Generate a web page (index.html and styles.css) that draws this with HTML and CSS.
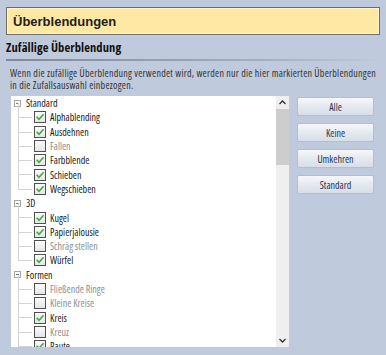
FILE: index.html
```html
<!DOCTYPE html>
<html lang="de">
<head>
<meta charset="utf-8">
<link rel="stylesheet" href="styles.css">
</head>
<body>
<div class="page">
  <div class="banner"><span>Überblendungen</span></div>
  <h2 class="section-title">Zufällige Überblendung</h2>
  <p class="desc">Wenn die zufällige Überblendung verwendet wird, werden nur die hier markierten Überblendungen in die Zufallsauswahl einbezogen.</p>
  <div class="main">
    <div class="treebox">
      <div class="tree">
        <div class="group">
          <div class="group-head"><span class="expander"></span>Standard</div>
          <ul class="items">
            <li class="item on"><span class="cb"></span>Alphablending</li>
            <li class="item on"><span class="cb"></span>Ausdehnen</li>
            <li class="item"><span class="cb"></span>Fallen</li>
            <li class="item on"><span class="cb"></span>Farbblende</li>
            <li class="item on"><span class="cb"></span>Schieben</li>
            <li class="item on"><span class="cb"></span>Wegschieben</li>
          </ul>
        </div>
        <div class="group">
          <div class="group-head"><span class="expander"></span>3D</div>
          <ul class="items">
            <li class="item on"><span class="cb"></span>Kugel</li>
            <li class="item on"><span class="cb"></span>Papierjalousie</li>
            <li class="item"><span class="cb"></span>Schräg stellen</li>
            <li class="item on"><span class="cb"></span>Würfel</li>
          </ul>
        </div>
        <div class="group">
          <div class="group-head"><span class="expander"></span>Formen</div>
          <ul class="items">
            <li class="item"><span class="cb"></span>Fließende Ringe</li>
            <li class="item"><span class="cb"></span>Kleine Kreise</li>
            <li class="item on"><span class="cb"></span>Kreis</li>
            <li class="item"><span class="cb"></span>Kreuz</li>
            <li class="item on"><span class="cb"></span>Raute</li>
            <li class="item"><span class="cb"></span>Stern</li>
          </ul>
        </div>
      </div>
      <div class="scrollbar">
        <div class="arrow up"><svg width="7" height="5" viewBox="0 0 7 5"><path d="M0.5 4 L3.5 1 L6.5 4" fill="none" stroke="#333" stroke-width="1.3"/></svg></div>
        <div class="track"><div class="thumb"></div></div>
        <div class="arrow down"><svg width="7" height="5" viewBox="0 0 7 5"><path d="M0.5 1 L3.5 4 L6.5 1" fill="none" stroke="#333" stroke-width="1.3"/></svg></div>
      </div>
    </div>
    <div class="buttons">
      <button class="btn">Alle</button>
      <button class="btn">Keine</button>
      <button class="btn">Umkehren</button>
      <button class="btn">Standard</button>
    </div>
  </div>
</div>
</body>
</html>
```
FILE: styles.css
```css
html, body {
  margin: 0;
  padding: 0;
}
body {
  background: #bfcbdc;
  font-family: "Open Sans", "Liberation Sans", Arial, sans-serif;
  font-stretch: 75%;
  font-size: 10px;
  color: #222;
  width: 386px;
  height: 355px;
  overflow: hidden;
}
.page {
  padding: 7px 6px 0 6px;
}
.banner {
  height: 26px;
  border: 1px solid #6f6f6a;
  background: #ffe8a4;
  box-shadow: inset 0 0 0 1px #fff3c8;
  display: flex;
  align-items: center;
  padding-left: 6px;
  font-family: "Liberation Sans", Arial, sans-serif;
  font-stretch: 100%;
  font-weight: bold;
  font-size: 13px;
  color: #1e1e1e;
}
.section-title {
  margin: 5px 0 0 0;
  font-family: "Open Sans", "Liberation Sans", Arial, sans-serif;
  font-stretch: 75%;
  font-size: 12.5px;
  letter-spacing: 0.1px;
  font-weight: bold;
  color: #111;
  padding-bottom: 4px;
  border-bottom: 2px solid;
  border-image: linear-gradient(to right, #7f8898, #a4afbf 70%, #bfcbdc) 1;
  line-height: 15px;
}
.desc {
  margin: 6px 0 0 4px;
  font-size: 10px;
  letter-spacing: 0.25px;
  line-height: 12px;
  color: #333;
}
.main {
  display: flex;
  margin-top: 5px;
  padding-left: 5px;
}
.treebox {
  width: 278px;
  height: 251px;
  background: #fff;
  display: flex;
  overflow: hidden;
}
.tree {
  flex: 1;
  padding: 0 0 0 3px;
  overflow: hidden;
}
.group-head {
  height: 14.3px;
  display: flex;
  align-items: center;
  color: #222;
}
.expander {
  width: 7px;
  height: 7px;
  border: 1px solid #a8a8a8;
  box-sizing: border-box;
  margin-right: 5px;
  position: relative;
}
.expander::after {
  content: "";
  position: absolute;
  left: 1px;
  top: 2px;
  width: 3px;
  height: 1px;
  background: #777;
}
.items {
  list-style: none;
  margin: 0;
  padding: 0 0 0 20px;
}
.item {
  position: relative;
  height: 14.3px;
  display: flex;
  align-items: center;
  color: #8e8e8e;
}
.item.on {
  color: #1a1a1a;
}
.item::before {
  content: "";
  position: absolute;
  left: -16px;
  top: -7px;
  width: 13px;
  height: 14px;
  border-left: 1px solid #d4d4d4;
  border-bottom: 1px solid #d4d4d4;
}
.cb {
  width: 12px;
  height: 12px;
  box-sizing: border-box;
  border: 1px solid #505050;
  background: linear-gradient(#fafafa, #e6e6e6);
  margin-right: 4px;
  flex: none;
}
.item.on .cb {
  background: url("data:image/svg+xml;utf8,<svg xmlns='http://www.w3.org/2000/svg' width='10' height='10' viewBox='0 0 10 10'><path d='M1.6 4.8 L4 7.3 L8.6 2.2' fill='none' stroke='%2344a843' stroke-width='1.6'/></svg>") center/10px 10px no-repeat, linear-gradient(#fafafa, #e6e6e6);
}
.scrollbar {
  width: 13px;
  background: #efefef;
  display: flex;
  flex-direction: column;
}
.arrow {
  height: 13px;
  display: flex;
  align-items: center;
  justify-content: center;
}
.track {
  flex: 1;
}
.thumb {
  height: 56px;
  background: #cdcdcd;
}
.buttons {
  display: flex;
  flex-direction: column;
  gap: 7px;
  margin-left: 8px;
  padding-top: 1px;
}
.btn {
  width: 77px;
  height: 19px;
  border: 1px solid #b4bfcd;
  border-radius: 2px;
  background: linear-gradient(#f5f7fa, #e2e7ee 60%, #d8dee7);
  font-family: "Open Sans", "Liberation Sans", Arial, sans-serif;
  font-stretch: 75%;
  font-weight: 500;
  font-size: 10px;
  color: #273650;
  padding: 0;
}
```
